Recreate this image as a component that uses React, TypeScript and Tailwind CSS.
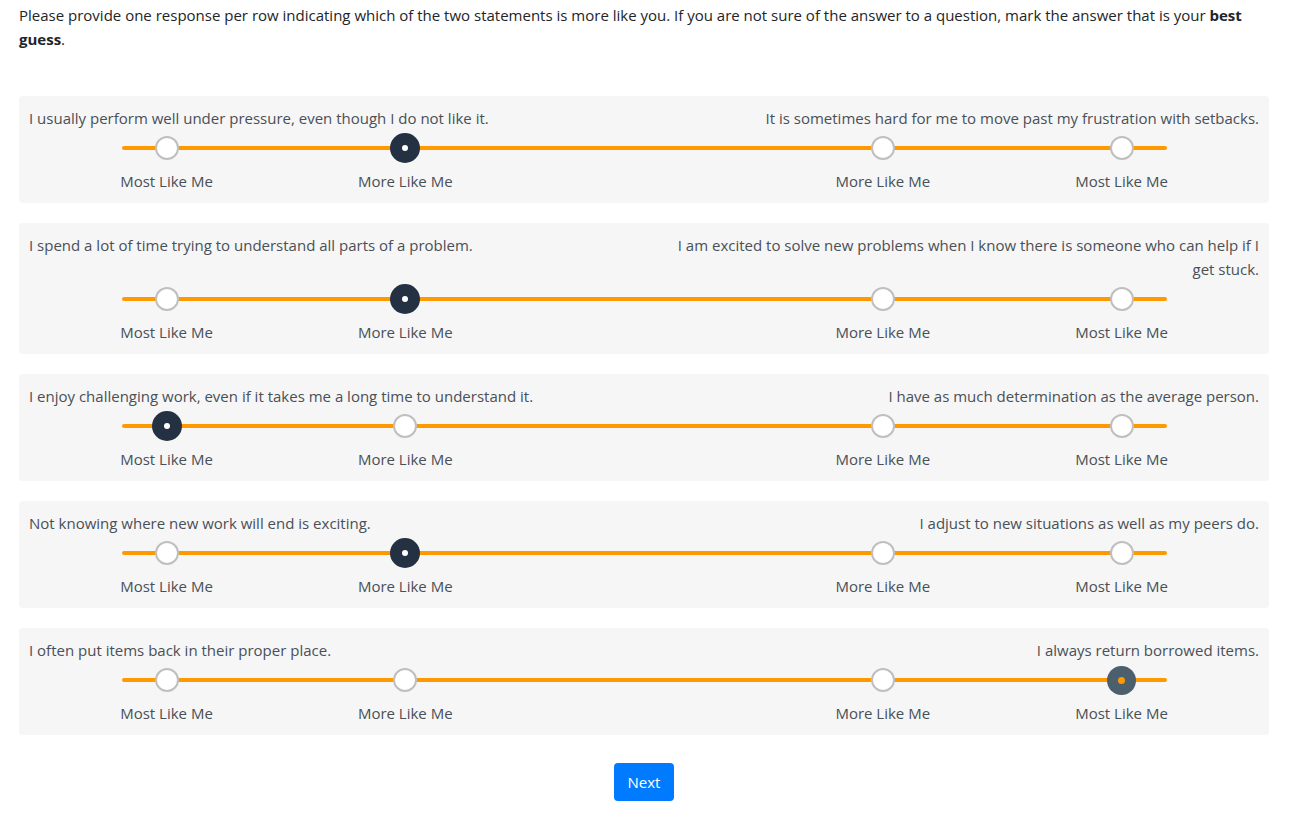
type Choice = 'none' | 'selected' | 'focus';

interface Item {
  id: string;
  left: string;
  right: string;
  picked: number; // index 0..3
  state: Choice;
}

const ITEMS: Item[] = [
  {
    id: 'q1',
    left: 'I usually perform well under pressure, even though I do not like it.',
    right: 'It is sometimes hard for me to move past my frustration with setbacks.',
    picked: 1,
    state: 'selected',
  },
  {
    id: 'q2',
    left: 'I spend a lot of time trying to understand all parts of a problem.',
    right: 'I am excited to solve new problems when I know there is someone who can help if I get stuck.',
    picked: 1,
    state: 'selected',
  },
  {
    id: 'q3',
    left: 'I enjoy challenging work, even if it takes me a long time to understand it.',
    right: 'I have as much determination as the average person.',
    picked: 0,
    state: 'selected',
  },
  {
    id: 'q4',
    left: 'Not knowing where new work will end is exciting.',
    right: 'I adjust to new situations as well as my peers do.',
    picked: 1,
    state: 'selected',
  },
  {
    id: 'q5',
    left: 'I often put items back in their proper place.',
    right: 'I always return borrowed items.',
    picked: 3,
    state: 'focus',
  },
];

const LABELS = ['Most Like Me', 'More Like Me', '', 'More Like Me', 'Most Like Me'];

function Knob({ on, state }: { on: boolean; state: Choice }) {
  if (!on) {
    return <span className="block shrink-0 w-[24px] h-[24px] rounded-full bg-white border-2 border-[#bfbfbf]" />;
  }
  if (state === 'focus') {
    return (
      <span className="flex shrink-0 w-[29px] h-[29px] rounded-full bg-[#4b5f6c] items-center justify-center">
        <span className="block w-[7px] h-[7px] rounded-full bg-[#ff9900]" />
      </span>
    );
  }
  return (
    <span className="flex shrink-0 w-[30px] h-[30px] rounded-full bg-[#243142] items-center justify-center">
      <span className="block w-[6px] h-[6px] rounded-full bg-white" />
    </span>
  );
}

function Row({ item }: { item: Item }) {
  // slots 0,1,(gap),3,4 -> picked index maps around the empty middle slot
  const slotFor = (i: number) => (i < 2 ? i : i + 1);
  return (
    <div className="bg-[#f6f6f6] rounded px-[10px] py-[10px]">
      <div className="flex justify-between gap-6 leading-6 text-[#495057]">
        <div className="w-1/2">{item.left}</div>
        <div className="w-[592px] text-right">{item.right}</div>
      </div>

      <div className="relative w-[1045px] mx-auto mt-[5px]">
        <div className="absolute left-0 right-0 top-[11px] h-1 rounded-full bg-[#ff9900]" />
        <div className="relative flex justify-between px-[32px]">
          {LABELS.map((label, slot) => (
            <div key={slot} className="flex flex-col items-center w-[26px]">
              <div className="flex w-[26px] h-[26px] items-center justify-center">
                {slot !== 2 && <Knob on={slotFor(item.picked) === slot} state={item.state} />}
              </div>
              <span className="mt-2 leading-6 whitespace-nowrap text-[#495057]">{label}</span>
            </div>
          ))}
        </div>
      </div>
    </div>
  );
}

export default function App() {
  return (
    <div className="min-h-screen bg-white font-['Open_Sans',sans-serif] text-[15px]">
      <div className="w-[1250px] ml-[19px] pt-[3px]">
        <p className="leading-6 text-[#212529]">
          Please provide one response per row indicating which of the two statements is more like you. If you are not
          sure of the answer to a question, mark the answer that is your <b>best</b> <b>guess</b>.
        </p>

        <div className="mt-[45px] flex flex-col gap-5">
          {ITEMS.map((item) => (
            <Row key={item.id} item={item} />
          ))}
        </div>

        <div className="flex justify-center mt-7">
          <button className="h-[38px] w-[60px] rounded bg-[#007bff] text-white text-[15px]">Next</button>
        </div>
      </div>
    </div>
  );
}
